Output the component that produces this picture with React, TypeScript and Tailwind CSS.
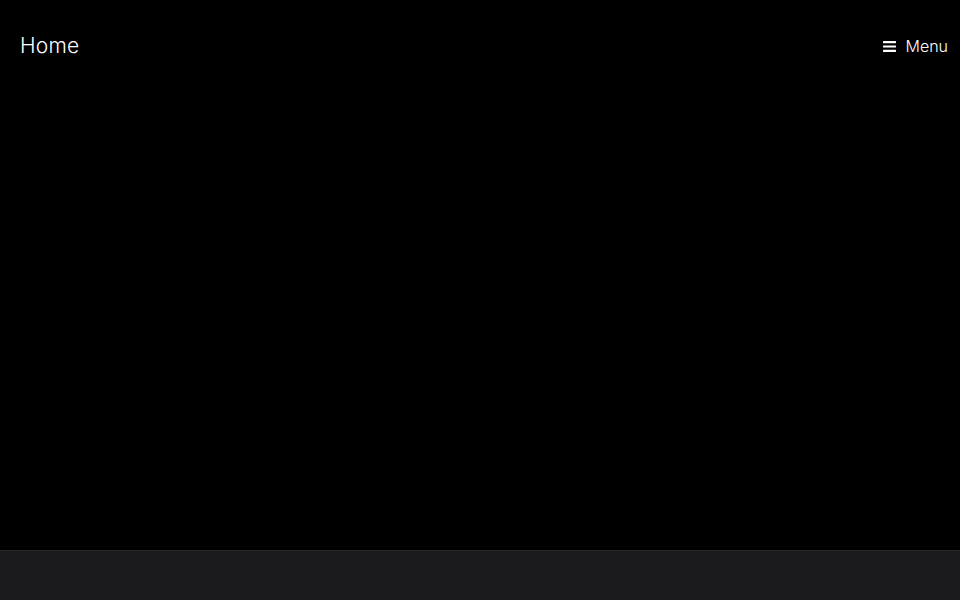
export default function App() {
    return (
        <div className="min-h-screen bg-black text-white font-['Inter','Liberation_Sans',sans-serif]">
            {/* Hero */}
            <div className="h-[550px] flex flex-col">
                <header className="flex items-center justify-between h-[92px] pl-5 pr-3">
                    <a href="#" className="text-[21px] font-light tracking-[0.2px]">Home</a>
                    <button className="flex items-center gap-[9px] text-[16px] font-light text-white">
                        {/* Bars icon */}
                        <svg width="13" height="11" viewBox="0 0 13 11" fill="currentColor">
                            <rect x="0" y="0" width="13" height="2.2" rx="0.5" />
                            <rect x="0" y="4.4" width="13" height="2.2" rx="0.5" />
                            <rect x="0" y="8.8" width="13" height="2.2" rx="0.5" />
                        </svg>
                        Menu
                    </button>
                </header>
            </div>

            {/* Content below the fold */}
            <section className="h-[50px] bg-[#1b1b1d] border-t border-[#2a2a2a]" />
        </div>
    );
}
